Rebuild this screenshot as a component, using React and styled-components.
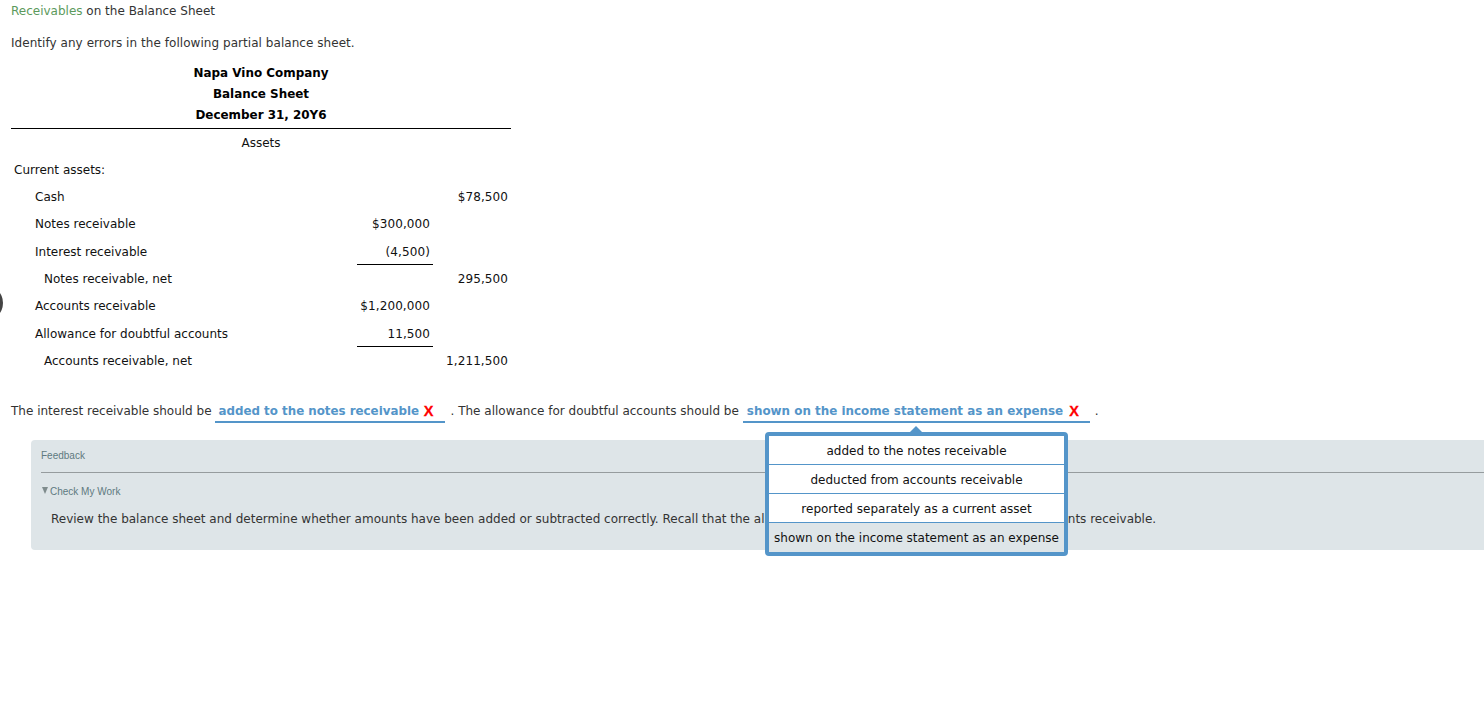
import React from "react";
import styled, { createGlobalStyle } from "styled-components";

const Global = createGlobalStyle`
  html, body { margin: 0; padding: 0; background: #fff; overflow: hidden; }
  body { font-family: "DejaVu Sans", Verdana, sans-serif; font-size: 12px; color: #333; }
`;

const Page = styled.div`
  position: relative;
  width: 1484px;
  height: 702px;
  overflow: hidden;
  padding: 4px 0 0 11px;
  box-sizing: border-box;
`;

const SideDot = styled.div`
  position: absolute;
  left: -33px;
  top: 285px;
  width: 36px;
  height: 36px;
  border-radius: 50%;
  background: #444;
`;

const Title = styled.div`
  line-height: 15px;
  color: #333;
`;
const TitleLink = styled.span`
  color: #5c9a5c;
`;
const Instruction = styled.div`
  margin-top: 17px;
  line-height: 15px;
  letter-spacing: 0.05px;
`;

const Sheet = styled.div`
  width: 500px;
  margin-top: 12px;
  color: #111;
`;
const Heading = styled.div`
  text-align: center;
  font-weight: 700;
  font-size: 11.95px;
  line-height: 21px;
  color: #000;
`;
const HeadingBlock = styled.div`
  border-bottom: 1px solid #000;
  padding-bottom: 2px;
`;
const SubHeading = styled.div`
  text-align: center;
  line-height: 27px;
  height: 26.7px;
  padding-top: 1px;
`;
const Row = styled.div`
  display: grid;
  grid-template-columns: 346px 76px 78px;
  height: 27.33px;
  align-items: stretch;
  line-height: 27px;
`;
const Label = styled.div`
  padding-left: ${(p) => p.$indent}px;
`;
const Amount = styled.div`
  text-align: right;
  padding-right: 3px;
  box-sizing: border-box;
  letter-spacing: 0.1px;
  height: ${(p) => (p.$rule ? "26px" : "auto")};
  border-bottom: ${(p) => (p.$rule ? "1px solid #000" : "none")};
`;

const Sentence = styled.div`
  display: flex;
  align-items: flex-start;
  margin-top: 27px;
  line-height: 15px;
  height: 38px;
`;
const Plain = styled.span`
  white-space: pre;
  padding-top: 2px;
`;
const Choice = styled.span`
  display: inline-flex;
  justify-content: space-between;
  box-sizing: border-box;
  width: ${(p) => p.$width}px;
  margin: 0 ${(p) => p.$right}px 0 ${(p) => p.$left}px;
  height: 21px;
  padding: 2px 11px 0 4px;
  border-bottom: 2px solid #5495c9;
  color: #5495c9;
  font-size: ${(p) => p.$size}px;
  font-weight: 700;
  white-space: nowrap;
`;
const Cross = styled.span`
  color: #f00;
  font-family: "Liberation Sans", Arial, sans-serif;
  font-size: 14.5px;
  font-weight: 700;
  line-height: 15px;
  -webkit-text-stroke: 0.3px #f00;
`;

const Panel = styled.div`
  margin-left: 20px;
  width: 1500px;
  height: 110px;
  background: #dee5e8;
  border-radius: 4px;
  padding: 0 10px;
  box-sizing: border-box;
`;
const PanelHead = styled.div`
  height: 32px;
  line-height: 31px;
  border-bottom: 1px solid #969c9e;
  font-family: "Liberation Sans", Arial, sans-serif;
  font-size: 10px;
  color: #5f7a80;
`;
const Disclosure = styled.div`
  display: flex;
  align-items: center;
  gap: 2px;
  margin-top: 12px;
  line-height: 13px;
  font-family: "Liberation Sans", Arial, sans-serif;
  font-size: 10px;
  color: #5f7a80;
`;
const Triangle = styled.span`
  width: 0;
  height: 0;
  margin: -3px 0 0 1px;
  border-left: 3.5px solid transparent;
  border-right: 3.5px solid transparent;
  border-top: 7px solid #7f8c8d;
`;
const PanelBody = styled.div`
  margin-top: 14px;
  margin-left: 10px;
  line-height: 15px;
  white-space: nowrap;
`;

const Popover = styled.div`
  position: absolute;
  left: 765px;
  top: 432px;
  width: 303px;
  height: 124px;
  box-sizing: border-box;
  border: 4px solid #5495c9;
  border-radius: 4px;
  background: #fff;
  &::before {
    content: "";
    position: absolute;
    left: 141px;
    top: -10px;
    border-left: 6px solid transparent;
    border-right: 6px solid transparent;
    border-bottom: 6px solid #5495c9;
  }
`;
const Option = styled.div`
  height: 29px;
  line-height: 30px;
  text-align: center;
  color: #111;
  white-space: nowrap;
  box-sizing: border-box;
  background: ${(p) => (p.$selected ? "#dee5e8" : "#fff")};
  border-bottom: ${(p) => (p.$last ? "none" : "1px solid #5495c9")};
`;

const rows = [
  { label: "Cash", indent: 24, c2: "$78,500" },
  { label: "Notes receivable", indent: 24, c1: "$300,000" },
  { label: "Interest receivable", indent: 24, c1: "(4,500)", rule: true },
  { label: "Notes receivable, net", indent: 33, c2: "295,500" },
  { label: "Accounts receivable", indent: 24, c1: "$1,200,000" },
  { label: "Allowance for doubtful accounts", indent: 24, c1: "11,500", rule: true },
  { label: "Accounts receivable, net", indent: 33, c2: "1,211,500" },
];

const options = [
  "added to the notes receivable",
  "deducted from accounts receivable",
  "reported separately as a current asset",
  "shown on the income statement as an expense",
];

export default function App() {
  return (
    <Page>
      <Global />
      <SideDot />
      <Title>
        <TitleLink>Receivables</TitleLink> on the Balance Sheet
      </Title>
      <Instruction>Identify any errors in the following partial balance sheet.</Instruction>
      <Sheet>
        <HeadingBlock>
          <Heading>Napa Vino Company</Heading>
          <Heading>Balance Sheet</Heading>
          <Heading>December 31, 20Y6</Heading>
        </HeadingBlock>
        <SubHeading>Assets</SubHeading>
        <Row>
          <Label $indent={3}>Current assets:</Label>
          <Amount />
          <Amount />
        </Row>
        {rows.map((r) => (
          <Row key={r.label}>
            <Label $indent={r.indent}>{r.label}</Label>
            <Amount $rule={r.rule}>{r.c1}</Amount>
            <Amount>{r.c2}</Amount>
          </Row>
        ))}
      </Sheet>
      <Sentence>
        <Plain>The interest receivable should be</Plain>
        <Choice $width={230} $left={3} $right={6} $size={11.85}>
          added to the notes receivable <Cross>X</Cross>
        </Choice>
        <Plain>. The allowance for doubtful accounts should be</Plain>
        <Choice $width={347} $left={4} $right={5} $size={11.92}>
          shown on the income statement as an expense <Cross>X</Cross>
        </Choice>
        <Plain>.</Plain>
      </Sentence>
      <Panel>
        <PanelHead>Feedback</PanelHead>
        <Disclosure>
          <Triangle />
          Check My Work
        </Disclosure>
        <PanelBody>
          Review the balance sheet and determine whether amounts have been added or subtracted correctly. Recall that the allowance for doubtful accounts is taken from accounts receivable.
        </PanelBody>
      </Panel>
      <Popover>
        {options.map((o, i) => (
          <Option key={o} $selected={i === 3} $last={i === 3}>
            {o}
          </Option>
        ))}
      </Popover>
    </Page>
  );
}
